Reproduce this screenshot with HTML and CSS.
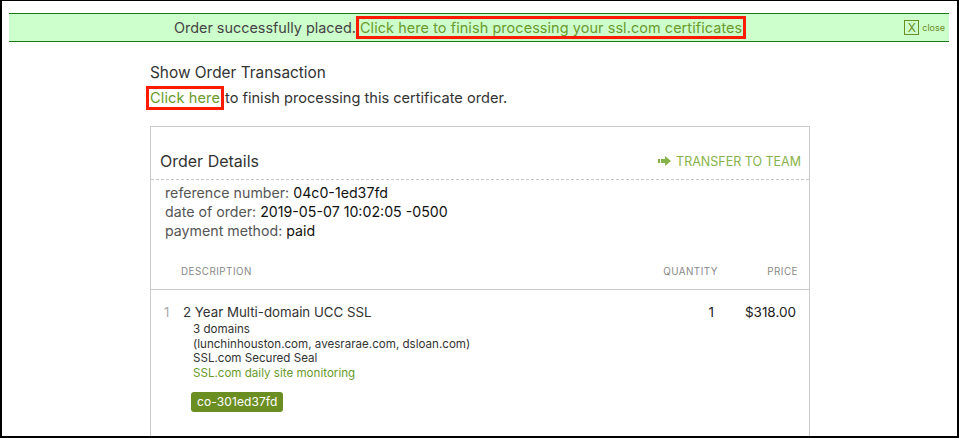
FILE: index.html
```html
<!DOCTYPE html>
<html>
<head>
<meta charset="utf-8">
<link rel="stylesheet" href="styles.css">
</head>
<body>
<div class="frame">
  <div class="notice">
    <div class="notice-text">Order successfully placed.<a class="boxed-link" href="#">Click here to finish processing your ssl.com certificates</a></div>
    <div class="notice-close"><span class="x-box">X</span><span class="close-word">close</span></div>
  </div>
  <div class="content">
    <div class="title">Show Order Transaction</div>
    <div class="subline"><a class="boxed-link small" href="#">Click here</a>to finish processing this certificate order.</div>
    <div class="card">
      <div class="card-head">
        <div class="card-title">Order Details</div>
        <a class="transfer" href="#"><svg class="transfer-icon" width="14" height="10" viewBox="0 0 14 10"><rect x="0" y="3" width="2" height="4" fill="#86b24a"/><rect x="3" y="3" width="4" height="4" fill="#86b24a"/><polygon points="7,0 13,5 7,10" fill="#86b24a"/></svg>TRANSFER TO TEAM</a>
      </div>
      <div class="info">
        <div><span class="lbl">reference number:</span> 04c0-1ed37fd</div>
        <div><span class="lbl">date of order:</span> 2019-05-07 10:02:05 -0500</div>
        <div><span class="lbl">payment method:</span> paid</div>
      </div>
      <table class="items">
        <colgroup>
          <col class="col-num">
          <col>
          <col class="col-qty">
          <col class="col-price">
        </colgroup>
        <thead>
          <tr><th class="h-num"></th><th class="h-desc">Description</th><th class="h-qty">Quantity</th><th class="h-price">Price</th></tr>
        </thead>
        <tbody>
          <tr>
            <td class="num">1</td>
            <td class="desc">
              <div class="item-name">2 Year Multi-domain UCC SSL</div>
              <div class="item-sub">
                <div>3 domains</div>
                <div>(lunchinhouston.com, avesrarae.com, dsloan.com)</div>
                <div>SSL.com Secured Seal</div>
                <div class="green">SSL.com daily site monitoring</div>
              </div>
              <span class="badge">co-301ed37fd</span>
            </td>
            <td class="qty">1</td>
            <td class="price">$318.00</td>
          </tr>
        </tbody>
      </table>
    </div>
  </div>
</div>
</body>
</html>
```

FILE: styles.css
```css
html, body {
  margin: 0;
  padding: 0;
  background: #fff;
}
body {
  font-family: "Inter", "DejaVu Sans", sans-serif;
  color: #333;
}
.frame {
  box-sizing: border-box;
  width: 959px;
  height: 438px;
  border: 2px solid #000;
  border-top-width: 1px;
  overflow: hidden;
}
.notice {
  margin: 12px 8px 0 7px;
  height: 27px;
  background: #ccffcc;
  border-top: 1px solid #1a7a1a;
  border-bottom: 1px solid #1a7a1a;
  display: flex;
  align-items: center;
}
.notice-text {
  flex: 1;
  padding-left: 165px;
  font-size: 14.4px;
  color: #444;
  white-space: nowrap;
}
.boxed-link {
  color: #6a9a2a;
  text-decoration: none;
  border: 3px solid #ff1a00;
  padding: 0 1px;
  letter-spacing: 0.1px;
}
.notice-close {
  display: flex;
  align-items: center;
  margin-right: 4px;
}
.x-box {
  box-sizing: border-box;
  width: 15px;
  height: 15px;
  border: 1px solid #6b8e23;
  color: #6b8e23;
  font-size: 12px;
  line-height: 13px;
  text-align: center;
}
.close-word {
  margin-left: 3px;
  font-size: 9px;
  color: #6b8e23;
}
.content {
  margin: 21px 0 0 148px;
  width: 660px;
}
.title {
  font-size: 15.4px;
  line-height: 20px;
  color: #333;
}
.subline {
  margin-top: 5px;
  font-size: 14.6px;
  line-height: 20px;
  color: #333;
}
.boxed-link.small {
  padding: 0 1px 0 1px;
  margin: 0 1px 0 -4px;
  letter-spacing: 0.1px;
}
.card {
  margin-top: 18px;
  border: 1px solid #ccc;
  border-bottom: none;
  height: 400px;
}
.card-head {
  display: flex;
  justify-content: space-between;
  align-items: center;
  padding: 24px 8px 8px 9px;
  border-bottom: 1px dashed #c8c8c8;
}
.card-title {
  font-size: 16px;
  line-height: 20px;
  color: #333;
}
.transfer {
  font-size: 12.5px;
  color: #86b24a;
  text-decoration: none;
  display: flex;
  align-items: center;
  gap: 4px;
}
.info {
  padding: 4px 14px 0;
  font-size: 14.2px;
  line-height: 18.8px;
  color: #111;
}
.lbl {
  color: #555;
}
.items {
  width: 100%;
  table-layout: fixed;
  border-collapse: collapse;
  margin-top: 25px;
}
.col-num {
  width: 30px;
}
.col-qty {
  width: 100px;
}
.col-price {
  width: 80px;
}
.items th {
  font-size: 9.8px;
  font-weight: normal;
  text-transform: uppercase;
  color: #888;
  letter-spacing: 0.5px;
  padding: 0 0 10px;
  border-bottom: 1px solid #ccc;
  line-height: 14px;
}
.items th.h-desc {
  text-align: left;
}
.items th.h-qty {
  text-align: right;
  padding-right: 11px;
}
.items th.h-price {
  text-align: right;
  padding-right: 11px;
}
.items td {
  vertical-align: top;
  padding: 14px 0 0;
}
.items td.num {
  color: #aaa;
  font-size: 13px;
  padding-left: 13px;
}
.items td.desc {
  padding-left: 2px;
}
.item-name {
  font-size: 13.3px;
  line-height: 16px;
  margin-bottom: 2px;
  color: #333;
}
.item-sub {
  padding-left: 10px;
  font-size: 11.6px;
  line-height: 14.4px;
  color: #333;
}
.green {
  color: #6a9a2a;
}
.badge {
  display: inline-block;
  margin: 12px 0 0 8px;
  padding: 2px 6px;
  background: #6b8e23;
  color: #fff;
  font-size: 12px;
  line-height: 16px;
  border-radius: 3px;
  letter-spacing: 0.1px;
}
.items td.qty, .items td.price {
  font-size: 13.5px;
  color: #222;
  line-height: 16px;
  text-align: right;
}
.items td.qty {
  padding-right: 15px;
}
.items td.price {
  padding-right: 13px;
}
```
